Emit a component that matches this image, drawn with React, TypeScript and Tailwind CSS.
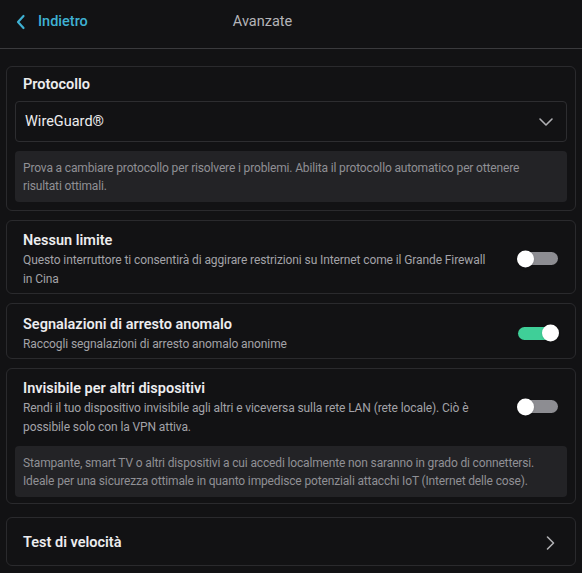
import { useState } from "react";

function Toggle({ on, onChange }: { on: boolean; onChange: () => void }) {
  return (
    <button
      onClick={onChange}
      className={`relative h-[13px] w-[40px] shrink-0 rounded-full ${on ? "bg-[#3fcf98]" : "bg-[#8d8d92]"}`}
    >
      <span
        className={`absolute top-1/2 h-[17px] w-[17px] -translate-y-1/2 rounded-full bg-white shadow ${on ? "right-[-1px]" : "left-[-1px]"}`}
      />
    </button>
  );
}

function ToggleCard({
  title,
  desc,
  on,
  onChange,
  className = "pt-[10px] pb-[4px]",
  children,
}: {
  title: string;
  desc: React.ReactNode;
  on: boolean;
  onChange: () => void;
  className?: string;
  children?: React.ReactNode;
}) {
  return (
    <div className={`rounded-md border border-[#2a2a2d] px-[8px] ${className}`}>
      <div className="flex items-center gap-2 pl-[8px]">
        <div className="flex-1">
          <div className="text-[14.5px] font-semibold leading-[20px] text-[#ececee]">{title}</div>
          <div className="text-[12px] leading-[19px] tracking-[-0.1px] text-[#a3a3a8]">{desc}</div>
        </div>
        <div className="mr-[9px]">
          <Toggle on={on} onChange={onChange} />
        </div>
      </div>
      {children}
    </div>
  );
}

function InfoBox({ children }: { children: React.ReactNode }) {
  return (
    <div className="mt-[9px] rounded bg-[#232326] px-[8px] pt-[8px] pb-[7px] text-[12px] leading-[18px] tracking-[-0.15px] text-[#909095]">
      {children}
    </div>
  );
}

export default function App() {
  const [noLimit, setNoLimit] = useState(false);
  const [crash, setCrash] = useState(true);
  const [invisible, setInvisible] = useState(false);

  return (
    <div
      className="min-h-[573px] w-[582px] bg-[#121214] text-white"
      style={{ fontFamily: "Roboto, 'Open Sans', sans-serif" }}
    >
      <header className="flex h-[49px] items-center border-b border-[#3a3a3d] pb-[4px]">
        <button className="flex items-center gap-[12px] pl-[15px] text-[#3fb1d3]">
          <svg width="11" height="16" viewBox="0 0 11 16" fill="none">
            <path d="M8.5 2L3 8l5.5 6" stroke="currentColor" strokeWidth="2.2" strokeLinecap="round" strokeLinejoin="round" />
          </svg>
          <span className="text-[14.5px] font-medium">Indietro</span>
        </button>
        <div className="ml-[145px] text-[14.5px] text-[#b4b4b8]">Avanzate</div>
      </header>

      <main className="flex flex-col gap-[9px] px-[6px] pt-[17px]">
        <div className="rounded-md border border-[#2a2a2d] px-[8px] pt-[8px] pb-[8px]">
          <div className="pl-[8px] text-[14.5px] font-semibold leading-[20px] text-[#ececee]">Protocollo</div>
          <div className="mt-[6px] flex h-[41px] items-center justify-between rounded border border-[#2d2d30] pl-[9px] pr-[12px]">
            <span className="text-[14.5px] text-[#ececee]">WireGuard®</span>
            <svg width="16" height="10" viewBox="0 0 16 10" fill="none">
              <path d="M2 2l6 6 6-6" stroke="#b0b0b4" strokeWidth="1.6" strokeLinecap="round" strokeLinejoin="round" />
            </svg>
          </div>
          <InfoBox>
            Prova a cambiare protocollo per risolvere i problemi. Abilita il protocollo automatico per ottenere
            <br />
            risultati ottimali.
          </InfoBox>
        </div>

        <ToggleCard
          title="Nessun limite"
          desc={
            <>
              Questo interruttore ti consentirà di aggirare restrizioni su Internet come il Grande Firewall
              <br />
              in Cina
            </>
          }
          on={noLimit}
          onChange={() => setNoLimit(!noLimit)}
        />

        <ToggleCard
          title="Segnalazioni di arresto anomalo"
          desc="Raccogli segnalazioni di arresto anomalo anonime"
          on={crash}
          onChange={() => setCrash(!crash)}
          className="pt-[11px] pb-[4px]"
        />

        <ToggleCard
          title="Invisibile per altri dispositivi"
          desc={
            <>
              Rendi il tuo dispositivo invisibile agli altri e viceversa sulla rete LAN (rete locale). Ciò è
              <br />
              possibile solo con la VPN attiva.
            </>
          }
          on={invisible}
          onChange={() => setInvisible(!invisible)}
          className="pt-[10px] pb-[6px]"
        >
          <InfoBox>
            Stampante, smart TV o altri dispositivi a cui accedi localmente non saranno in grado di connettersi.
            <br />
            Ideale per una sicurezza ottimale in quanto impedisce potenziali attacchi IoT (Internet delle cose).
          </InfoBox>
        </ToggleCard>

        <button className="mt-[4px] flex h-[49px] items-center justify-between rounded-md border border-[#2a2a2d] pt-[3px] pl-[16px] pr-[20px]">
          <span className="text-[14.5px] font-semibold text-[#ececee]">Test di velocità</span>
          <svg width="10" height="16" viewBox="0 0 10 16" fill="none">
            <path d="M2.5 2l6 6-6 6" stroke="#b0b0b4" strokeWidth="1.6" strokeLinecap="round" strokeLinejoin="round" />
          </svg>
        </button>
      </main>
    </div>
  );
}
